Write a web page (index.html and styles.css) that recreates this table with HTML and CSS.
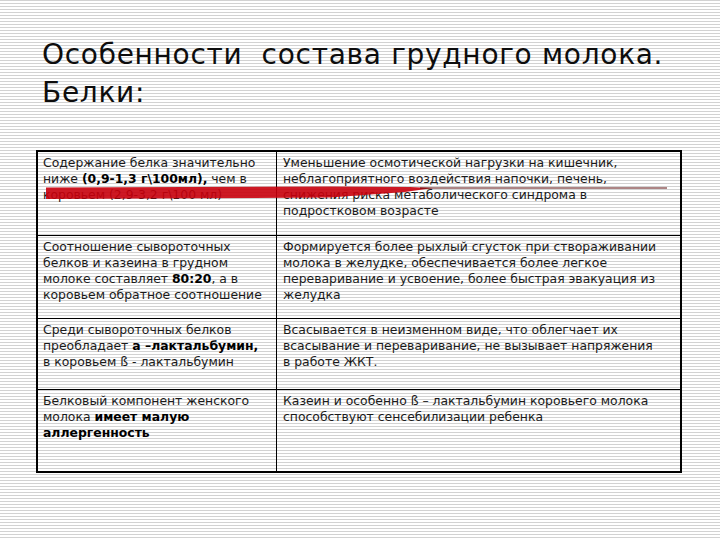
FILE: index.html
```html
<!DOCTYPE html>
<html lang="ru">
<head>
<meta charset="utf-8">
<title>Особенности состава грудного молока. Белки</title>
<link rel="stylesheet" href="styles.css">
</head>
<body>
<div class="slide">
  <h1 class="title">Особенности&nbsp; состава грудного молока.<br>Белки:</h1>
  <div class="table">
    <div class="cell left">Содержание белка значительно<br>ниже <b>(0,9-1,3 г\100мл),</b> чем в<br>коровьем (2,9-3,2 г\100 мл)</div>
    <div class="cell right">Уменьшение осмотической нагрузки на кишечник,<br>неблагоприятного воздействия напочки, печень,<br>снижения риска метаболического синдрома в<br>подростковом возрасте</div>
    <div class="cell left">Соотношение сывороточных<br>белков и казеина в грудном<br>молоке составляет <b>80:20</b>, а в<br>коровьем обратное соотношение</div>
    <div class="cell right">Формируется более рыхлый сгусток при створаживании<br>молока в желудке, обеспечивается более легкое<br>переваривание и усвоение, более быстрая эвакуация из<br>желудка</div>
    <div class="cell left">Среди сывороточных белков<br>преобладает <b>а –лактальбумин,</b><br>в коровьем ß - лактальбумин</div>
    <div class="cell right">Всасывается в неизменном виде, что облегчает их<br>всасывание и переваривание, не вызывает напряжения<br>в работе ЖКТ.</div>
    <div class="cell left last">Белковый компонент женского<br>молока <b>имеет малую<br>аллергенность</b></div>
    <div class="cell right last">Казеин и особенно ß – лактальбумин коровьего молока<br>способствуют сенсебилизации ребенка</div>
  </div>
  <svg class="stroke" width="720" height="540" viewBox="0 0 720 540" aria-hidden="true">
    <polygon points="46,187.5 330,186.5 410,187 433,188 405,192 330,197.5 46,199" fill="#c8000c" opacity="0.9"/>
    <line x1="420" y1="188" x2="667" y2="188" stroke="#5a0a0a" stroke-width="1"/>
  </svg>
</div>
</body>
</html>
```
FILE: styles.css
```css
html, body {
  margin: 0;
  padding: 0;
}
body {
  width: 720px;
  height: 540px;
  overflow: hidden;
  background: repeating-linear-gradient(to bottom, #d2d2d2 0, #d2d2d2 1px, #ffffff 1px, #ffffff 3px);
  font-family: "DejaVu Sans", Verdana, sans-serif;
  color: #111;
}
.slide {
  position: relative;
  width: 720px;
  height: 540px;
  padding-top: 36px;
  box-sizing: border-box;
}
.title {
  margin: 0 0 0 42px;
  font-weight: normal;
  font-size: 28px;
  line-height: 38px;
  letter-spacing: 0.7px;
  color: #0d0d0d;
}
.table {
  margin: 38px 0 0 36px;
  width: 646px;
  box-sizing: border-box;
  border: 2px solid #000;
  display: grid;
  grid-template-columns: 239px 1fr;
  grid-template-rows: 84px 83px 71px 81px;
}
.cell {
  box-sizing: border-box;
  padding: 3px 4px 0 5px;
  font-size: 12.4px;
  line-height: 16px;
  border-bottom: 1px solid #000;
  white-space: nowrap;
  color: #1a1a1a;
}
.cell b {
  color: #000;
}
.left {
  border-right: 1px solid #000;
}
.right {
  padding-left: 6px;
}
.last {
  border-bottom: none;
}
.stroke {
  position: absolute;
  left: 0;
  top: 0;
  pointer-events: none;
}
```
